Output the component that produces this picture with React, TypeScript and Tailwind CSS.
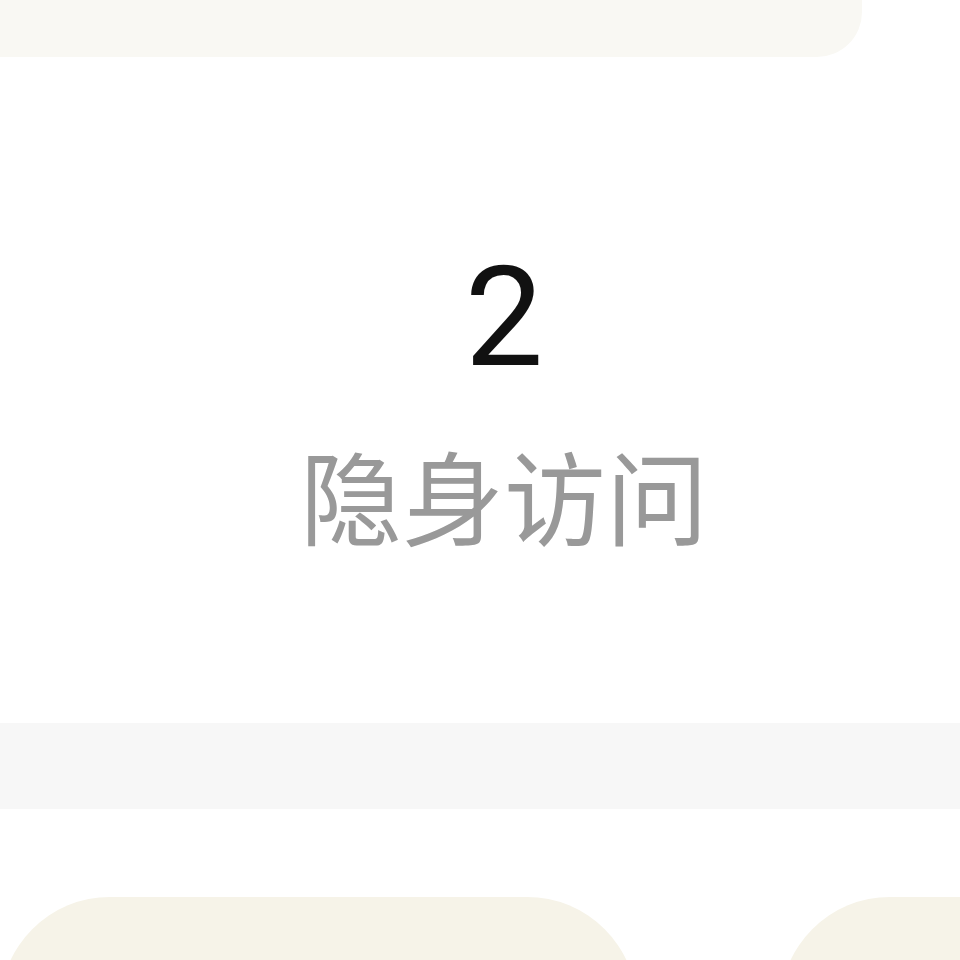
export default function App() {
  return (
    <div className="h-[960px] w-[960px] overflow-hidden bg-white">
      <div className="h-[57px] w-[862px] rounded-br-[45px] bg-[#f9f8f3]" />
      <section className="flex h-[666px] flex-col items-center pl-[48px] pt-[190px]">
        <div className="text-[140px] leading-[140px] text-[#111] [font-family:Roboto,'Noto_Sans',sans-serif]">
          2
        </div>
        <div className="mt-[52px] text-[102px] leading-[110px] text-[#999] [font-family:'Noto_Sans_CJK_SC',sans-serif]">
          隐身访问
        </div>
      </section>
      <div className="h-[86px] bg-[#f7f7f7]" />
      <div className="flex gap-[143px] pt-[88px]">
        <div className="h-[120px] w-[637px] shrink-0 rounded-t-[110px] bg-[#f6f3e8]" />
        <div className="h-[120px] w-[400px] shrink-0 rounded-t-[110px] bg-[#f6f3e8]" />
      </div>
    </div>
  );
}
